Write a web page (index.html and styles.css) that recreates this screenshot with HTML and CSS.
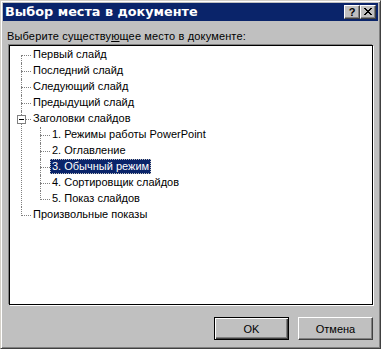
FILE: index.html
```html
<!DOCTYPE html>
<html lang="ru">
<head>
<meta charset="utf-8">
<title>Выбор места в документе</title>
<link rel="stylesheet" href="styles.css">
</head>
<body>
<div class="window">
  <div class="titlebar">
    <span class="title">Выбор места в документе</span>
    <div class="caption-buttons">
      <span class="cbtn help">?</span>
      <span class="cbtn close"><svg width="8" height="7" viewBox="0 0 8 7"><path d="M0 0h2v1h1v1h2v-1h1v-1h2v1h-1v1h-1v1h-1v1h1v1h1v1h1v1h-2v-1h-1v-1h-2v1h-1v1h-2v-1h1v-1h1v-1h1v-1h-1v-1h-1v-1h-1z" fill="#000"/></svg></span>
    </div>
  </div>
  <div class="content">
    <div class="prompt">Выберите существу<u>ю</u>щее место в документе:</div>
    <div class="treebox">
      <ul class="tree">
        <li><span class="label">Первый слайд</span></li>
        <li><span class="label">Последний слайд</span></li>
        <li><span class="label">Следующий слайд</span></li>
        <li><span class="label">Предыдущий слайд</span></li>
        <li class="open"><span class="toggle"></span><span class="label">Заголовки слайдов</span>
          <ul>
            <li><span class="label">1. Режимы работы PowerPoint</span></li>
            <li><span class="label">2. Оглавление</span></li>
            <li><span class="label selected">3. Обычный режим</span></li>
            <li><span class="label">4. Сортировщик слайдов</span></li>
            <li><span class="label">5. Показ слайдов</span></li>
          </ul>
        </li>
        <li><span class="label">Произвольные показы</span></li>
      </ul>
    </div>
    <div class="buttons">
      <button class="btn default">OK</button>
      <button class="btn">Отмена</button>
    </div>
  </div>
</div>
</body>
</html>
```
FILE: styles.css
```css
* { box-sizing: border-box; }
html, body { margin: 0; padding: 0; background: #c0c0c0; }
body { font-family: "Liberation Sans", Arial, sans-serif; font-size: 11px; color: #000; }

.window {
  width: 381px;
  height: 349px;
  background: #c0c0c0;
  border: 1px solid;
  border-color: #d4d0c8 #404040 #404040 #d4d0c8;
  box-shadow: inset 1px 1px 0 #fff, inset -1px -1px 0 #808080;
  padding: 2px;
  display: flex;
  flex-direction: column;
}

.titlebar {
  height: 18px;
  background: #0a246a;
  display: flex;
  align-items: center;
  justify-content: space-between;
  padding: 0 2px 0 2px;
}
.title {
  color: #fff;
  font-family: "DejaVu Sans", Verdana, sans-serif;
  font-weight: bold;
  font-size: 12.8px;
  line-height: 18px;
}
.caption-buttons { display: flex; }
.cbtn {
  width: 16px;
  height: 14px;
  background: #c0c0c0;
  border: 1px solid;
  border-color: #fff #404040 #404040 #fff;
  box-shadow: inset -1px -1px 0 #808080;
  display: flex;
  align-items: center;
  justify-content: center;
  font-weight: bold;
  font-size: 11px;
  line-height: 12px;
  padding-bottom: 1px;
}
.cbtn.close { padding: 0 1px 1px 0; }

.content {
  flex: 1;
  display: flex;
  flex-direction: column;
}
.prompt {
  margin-top: 9px;
  padding-left: 4px;
  line-height: 13px;
  height: 13px;
  letter-spacing: 0.15px;
}
.prompt u { text-underline-offset: 1px; }

.treebox {
  margin: 2px 5px 0 6px;
  height: 260px;
  background: #fff;
  border: 1px solid #000;
  box-shadow: -1px -1px 0 #808080, 1px 1px 0 #fff;
}

.tree, .tree ul {
  list-style: none;
  margin: 0;
  padding: 0;
}
.tree { padding-top: 1px; }
.tree ul { margin-left: -2px; }

.tree li {
  position: relative;
  padding-left: 21px;
  line-height: 16px;
}
.tree li::before {
  content: "";
  position: absolute;
  left: 11px;
  top: 8px;
  width: 10px;
  border-top: 1px dotted #808080;
}
.tree li::after {
  content: "";
  position: absolute;
  left: 11px;
  top: 0;
  bottom: 0;
  border-left: 1px dotted #808080;
}
.tree > li:first-child::after { top: 8px; }
.tree li:last-child::after { bottom: auto; height: 9px; }

.label {
  display: inline-block;
  padding: 0 2px;
  line-height: 15px;
  height: 15px;
  white-space: nowrap;
  vertical-align: top;
}
.label.selected {
  background: #0a246a;
  color: #fff;
  outline: 1px dotted #c0c0c0;
  outline-offset: -1px;
}

.toggle {
  position: absolute;
  z-index: 1;
  left: 7px;
  top: 4px;
  width: 9px;
  height: 9px;
  border: 1px solid #808080;
  background: #fff;
}
.toggle::after {
  content: "";
  position: absolute;
  left: 1px;
  top: 3px;
  width: 5px;
  height: 1px;
  background: #000;
}

.buttons {
  display: flex;
  justify-content: flex-end;
  gap: 9px;
  margin: 12px 5px 0 0;
}
.btn {
  width: 75px;
  height: 23px;
  font-family: "Liberation Sans", Arial, sans-serif;
  font-size: 11px;
  color: #000;
  background: #c0c0c0;
  border: 1px solid;
  border-color: #fff #404040 #404040 #fff;
  box-shadow: inset -1px -1px 0 #808080;
  padding: 0;
  margin: 0;
}
.btn.default {
  border: 1px solid #000;
  box-shadow: inset 1px 1px 0 #fff, inset -1px -1px 0 #404040, inset -2px -2px 0 #808080;
}
```
